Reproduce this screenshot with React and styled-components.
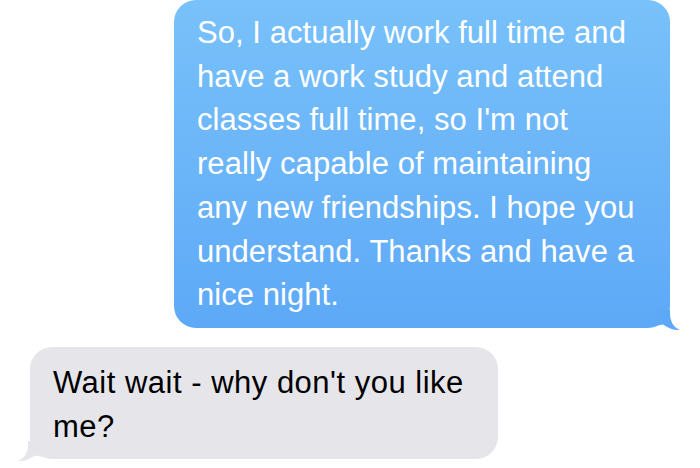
import React from 'react'
import styled, { createGlobalStyle } from 'styled-components'

const GlobalStyle = createGlobalStyle`
  html, body {
    margin: 0;
    padding: 0;
    background: #ffffff;
  }
  body {
    font-family: 'Liberation Sans', Arial, sans-serif;
    -webkit-font-smoothing: antialiased;
  }
`

const Thread = styled.div`
  width: 700px;
  height: 468px;
  overflow: hidden;
  display: flex;
  flex-direction: column;
  gap: 19px;
`

const Row = styled.div`
  display: flex;
  justify-content: ${(p) => (p.$sent ? 'flex-end' : 'flex-start')};
  padding: ${(p) => (p.$sent ? '0 30px 0 0' : '0 0 0 30px')};
`

const Bubble = styled.div`
  position: relative;
  width: ${(p) => p.$width}px;
  box-sizing: border-box;
  padding: ${(p) => (p.$sent ? '11px 10px 11px 23px' : '14px 10px 11px 23px')};
  border-radius: 22px;
  background: ${(p) =>
    p.$sent ? 'linear-gradient(180deg, #78c1fa 0%, #5ea9f7 100%)' : '#e5e5ea'};
  color: ${(p) => (p.$sent ? '#ffffff' : '#000000')};
  font-size: 31px;
  line-height: 43.7px;
  letter-spacing: ${(p) => (p.$sent ? '0.05px' : '0.5px')};
  white-space: nowrap;
`

const Tail = styled.svg`
  position: absolute;
  bottom: -2px;
  width: 26px;
  height: 20px;
  ${(p) => (p.$sent ? 'right: -11px;' : 'left: -13px; transform: scaleX(-1);')}
`

const TailShape = ({ sent }) => (
  <Tail $sent={sent} viewBox="0 0 26 20">
    <path
      d="M15 0 L15 3 C15 11 18 17 25 20 C19 20.5 13 18 8 14.5 L0 16 L0 0 Z"
      fill={sent ? '#5ea9f7' : '#e5e5ea'}
    />
  </Tail>
)

const App = () => {
  return (
    <>
      <GlobalStyle />
      <Thread>
        <Row $sent>
          <Bubble $sent $width={496}>
            So, I actually work full time and
            <br />
            have a work study and attend
            <br />
            classes full time, so I'm not
            <br />
            really capable of maintaining
            <br />
            any new friendships. I hope you
            <br />
            understand. Thanks and have a
            <br />
            nice night.
            <TailShape sent />
          </Bubble>
        </Row>
        <Row>
          <Bubble $width={468}>
            Wait wait - why don't you like
            <br />
            me?
            <TailShape />
          </Bubble>
        </Row>
      </Thread>
    </>
  )
}

export default App
